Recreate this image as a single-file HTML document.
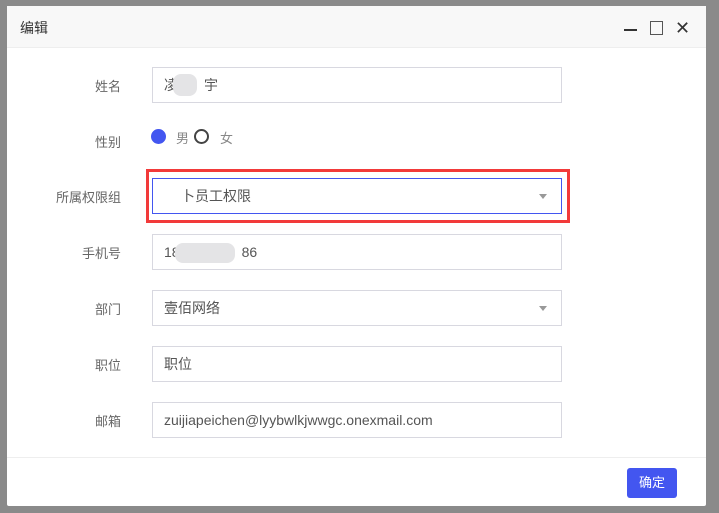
<!DOCTYPE html>
<html><head><meta charset="utf-8"><style>
*{box-sizing:border-box;margin:0;padding:0}
body{width:719px;height:513px;background:#8a8a8a;position:relative;overflow:hidden;font-family:"Liberation Sans","Noto Sans CJK SC",sans-serif;font-size:14px;color:#555}
.dlg{position:absolute;left:7px;top:6px;width:699px;height:500px;background:#fff;border-radius:2px}
.hd{height:42px;background:#f8f8f8;border-bottom:1px solid #eee;padding:12px 0 0 13px;color:#333;font-size:14px}
.lab{position:absolute;right:585px;width:120px;text-align:right;color:#666;font-size:13px}
.in{position:absolute;left:145px;width:410px;height:36px;border:1px solid #d8d8e0;padding:0 11px;line-height:34px;color:#555;font-size:14px}
.arr{position:absolute;right:14px;top:15px;border-left:4px solid transparent;border-right:4px solid transparent;border-top:5px solid #999}
.blur{position:absolute;background:#e4e4e6;border-radius:8px}
</style></head><body>
<div class="dlg">
<div class="hd">编辑</div>
<div style="position:absolute;left:617px;top:23px;width:13px;height:2px;background:#333"></div>
<div style="position:absolute;left:643px;top:15px;width:13px;height:14px;border:1px solid #555"></div>
<div style="position:absolute;left:668px;top:13px;font-size:18px;color:#333;line-height:18px">✕</div>

<div class="lab" style="top:70px">姓名</div>
<div class="in" style="top:61px">凌<span style="margin-left:26px">宇</span><div class="blur" style="left:20px;top:6px;width:24px;height:22px"></div></div>

<div class="lab" style="top:126px">性别</div>
<div style="position:absolute;left:144px;top:123px;width:15px;height:15px;border-radius:50%;background:#4356f0"></div>
<div style="position:absolute;left:169px;top:122px;color:#888;font-size:13px">男</div>
<div style="position:absolute;left:187px;top:123px;width:15px;height:15px;border-radius:50%;border:2px solid #444"></div>
<div style="position:absolute;left:213px;top:122px;color:#888;font-size:13px">女</div>

<div class="lab" style="top:181px">所属权限组</div>
<div style="position:absolute;left:139px;top:163px;width:424px;height:54px;border:3px solid #f23a3a"></div>
<div class="in" style="top:172px;border-color:#4356f0;padding-left:28px">卜员工权限<div class="arr"></div></div>

<div class="lab" style="top:237px">手机号</div>
<div class="in" style="top:228px">18<span style="margin-left:62px">86</span><div class="blur" style="left:22px;top:8px;width:60px;height:20px"></div></div>

<div class="lab" style="top:293px">部门</div>
<div class="in" style="top:284px">壹佰网络<div class="arr"></div></div>

<div class="lab" style="top:349px">职位</div>
<div class="in" style="top:340px">职位</div>

<div class="lab" style="top:405px">邮箱</div>
<div class="in" style="top:396px">zuijiapeichen@lyybwlkjwwgc.onexmail.com</div>

<div style="position:absolute;left:0;top:451px;width:699px;height:1px;background:#eee"></div>
<div style="position:absolute;left:620px;top:462px;width:50px;height:30px;background:#4356f0;border-radius:3px;color:#fff;font-size:13px;text-align:center;line-height:30px">确定</div>
</div>
</body></html>
